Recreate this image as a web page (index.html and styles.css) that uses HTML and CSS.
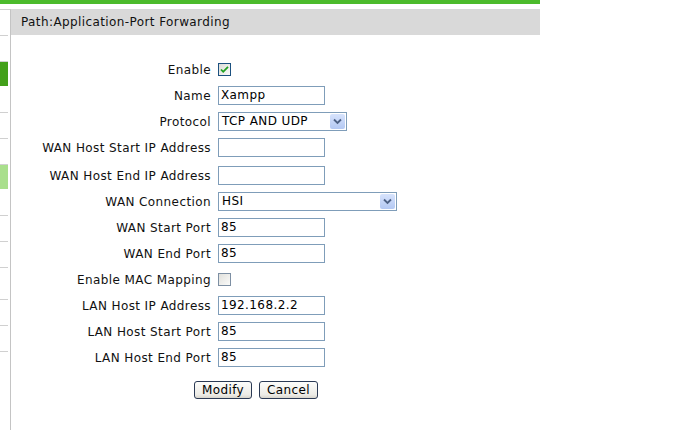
FILE: index.html
```html
<!DOCTYPE html>
<html>
<head>
<meta charset="utf-8">
<link rel="stylesheet" href="styles.css">
</head>
<body>
<div class="topbar"></div>
<div class="layout">
  <nav class="side">
    <div class="item"></div>
    <div class="item"></div>
    <div class="item active"></div>
    <div class="item"></div>
    <div class="item"></div>
    <div class="item"></div>
    <div class="item light"></div>
    <div class="item"></div>
    <div class="item"></div>
    <div class="item"></div>
    <div class="item tall"></div>
    <div class="item"></div>
    <div class="item"></div>
  </nav>
  <main class="main">
    <div class="path">Path:Application-Port Forwarding</div>
    <form class="form">
      <div class="row"><span class="lbl">Enable</span><span class="cb on"><svg width="9" height="9" viewBox="0 0 9 9"><path d="M1 4.5 L3.2 6.8 L8 1.8" fill="none" stroke="#21a121" stroke-width="1.8"/></svg></span></div>
      <div class="row"><span class="lbl">Name</span><span class="txt">Xampp</span></div>
      <div class="row"><span class="lbl">Protocol</span><span class="sel proto"><span class="val">TCP AND UDP</span><span class="arrow"><svg width="9" height="7" viewBox="0 0 9 7"><path d="M1 1.5 L4.5 5 L8 1.5" fill="none" stroke="#4d6185" stroke-width="1.8"/></svg></span></span></div>
      <div class="row"><span class="lbl">WAN Host Start IP Address</span><span class="txt"></span></div>
      <div class="row gap"><span class="lbl">WAN Host End IP Address</span><span class="txt"></span></div>
      <div class="row"><span class="lbl">WAN Connection</span><span class="sel conn"><span class="val">HSI</span><span class="arrow"><svg width="9" height="7" viewBox="0 0 9 7"><path d="M1 1.5 L4.5 5 L8 1.5" fill="none" stroke="#4d6185" stroke-width="1.8"/></svg></span></span></div>
      <div class="row"><span class="lbl">WAN Start Port</span><span class="txt">85</span></div>
      <div class="row"><span class="lbl">WAN End Port</span><span class="txt">85</span></div>
      <div class="row"><span class="lbl">Enable MAC Mapping</span><span class="cb off"></span></div>
      <div class="row"><span class="lbl">LAN Host IP Address</span><span class="txt">192.168.2.2</span></div>
      <div class="row"><span class="lbl">LAN Host Start Port</span><span class="txt">85</span></div>
      <div class="row"><span class="lbl">LAN Host End Port</span><span class="txt">85</span></div>
      <div class="buttons"><span class="btn w1">Modify</span><span class="btn w2">Cancel</span></div>
    </form>
  </main>
</div>
</body>
</html>
```
FILE: styles.css
```css
* { box-sizing: border-box; }
body {
  margin: 0;
  background: #fff;
  font-family: "DejaVu Sans", Verdana, sans-serif;
  font-size: 12px;
  letter-spacing: 0.4px;
  color: #000;
}
.topbar {
  width: 540px;
  height: 4px;
  background: #4cbb2c;
  margin-bottom: 5px;
}
.layout {
  display: flex;
  width: 540px;
}
.side {
  width: 11px;
  border-right: 1px solid #c4c4c4;
  border-top: 1px solid #d0d0d0;
  height: 421px;
  display: flex;
  flex-direction: column;
  padding-right: 2px;
}
.item {
  height: 26px;
  border-bottom: 1px solid #d0d0d0;
  flex: none;
}
.item.active {
  background: #43a01a;
  height: 25px;
  border-bottom: 1px solid #fff;
}
.item.light {
  background: #a9df8c;
  height: 25px;
  border-bottom: 1px solid #fff;
}
.item.tall { height: 32px; }
.main {
  flex: 1;
}
.path {
  height: 26px;
  background: #d9d9d9;
  padding-left: 10px;
  padding-top: 1px;
  line-height: 25px;
  color: #111;
}
.form {
  padding-top: 21px;
  display: flex;
  flex-direction: column;
}
.row {
  display: grid;
  grid-template-columns: 200px auto;
  column-gap: 7px;
  height: 26px;
  align-items: center;
}
.row.gap { margin-top: 2px; }
.lbl {
  text-align: right;
  white-space: nowrap;
  padding-top: 2px;
  color: #111;
}
.txt {
  width: 107px;
  height: 19px;
  border: 1px solid #7f9db9;
  padding-left: 2px;
  line-height: 17px;
  background: #fff;
}
.sel {
  height: 19px;
  border: 1px solid #7f9db9;
  display: flex;
  align-items: stretch;
  background: #fff;
}
.sel.proto { width: 129px; }
.sel.conn { width: 179px; }
.val {
  flex: 1;
  padding-left: 3px;
  line-height: 17px;
}
.arrow {
  width: 15px;
  margin: 1px;
  background: linear-gradient(#d7e3fc, #b3c8f3);
  border-radius: 2px;
  display: flex;
  align-items: center;
  justify-content: center;
}
.cb {
  width: 13px;
  height: 13px;
  border: 1px solid #1c5180;
  background: linear-gradient(135deg, #dcdcd7, #fbfbf9);
  display: flex;
  align-items: center;
  justify-content: center;
}
.cb.off {
  border-color: #7d8fa3;
  background: linear-gradient(135deg, #e0e0dc, #fbfbf9);
}
.buttons {
  margin-top: 11px;
  padding-left: 183px;
  display: flex;
  gap: 7px;
}
.btn {
  height: 18px;
  border: 1px solid #2b3a55;
  border-radius: 3px;
  background: linear-gradient(#fdfdfb, #ecebe6 80%, #d8d5cc);
  text-align: center;
  line-height: 16px;
  color: #000;
}
.btn.w1 { width: 58px; }
.btn.w2 { width: 59px; }
```
